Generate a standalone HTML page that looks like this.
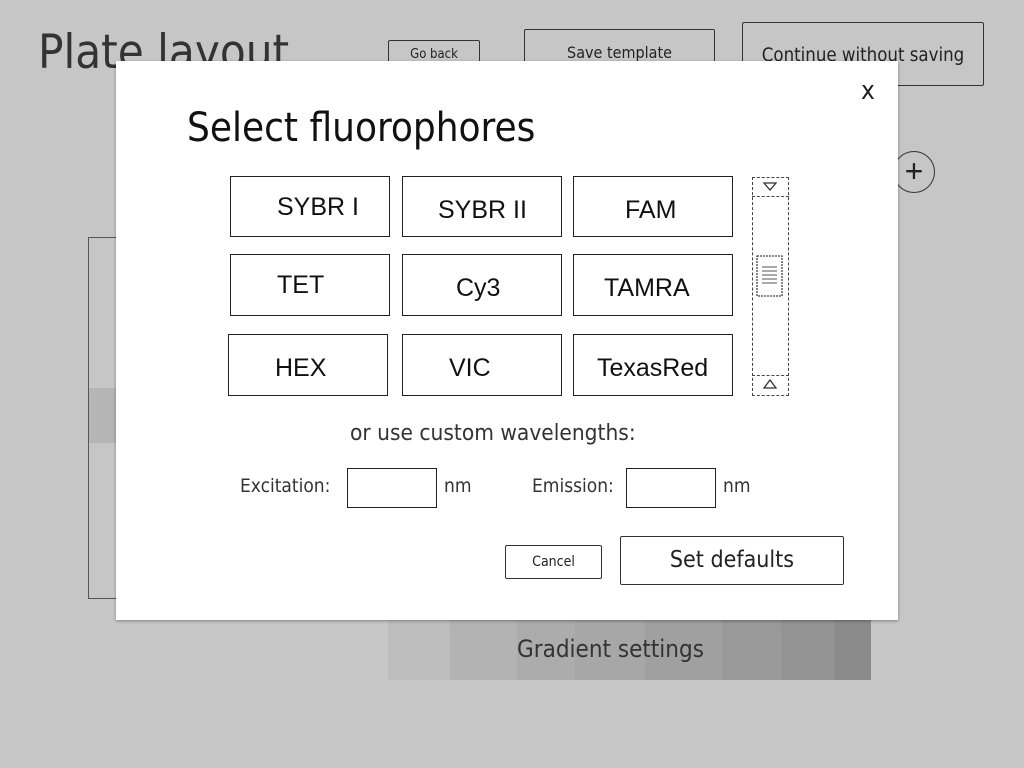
<!DOCTYPE html>
<html><head><meta charset="utf-8"><style>
*{margin:0;padding:0;box-sizing:border-box}
body{width:1024px;height:768px;background:#c6c6c6;position:relative;overflow:hidden;font-family:"Liberation Sans Narrow","DejaVu Sans Condensed","Liberation Sans",sans-serif;color:#222}
.a{position:absolute}
.bx{position:absolute;border:1.5px solid #333;border-radius:2px}
.fl{position:absolute;border:1px solid #222;background:#fff;font-family:"Liberation Sans",sans-serif;font-size:25px;line-height:66px;color:#111}
.fl span{position:absolute;top:0}
.seg{position:absolute;top:620px;height:60px}
</style></head><body>
<div class="a" style="left:38px;top:23px;font-size:47px;color:#333;line-height:60px">Plate layout</div>
<div class="bx" style="left:388px;top:40px;width:92px;height:28px;font-size:13px;text-align:center;line-height:28px">Go back</div>
<div class="bx" style="left:524px;top:29px;width:191px;height:40px;font-size:16px;text-align:center;line-height:46px">Save template</div>
<div class="bx" style="left:742px;top:22px;width:242px;height:64px;font-size:18.5px;text-align:center;line-height:66px">Continue without saving</div>
<div class="a" style="left:893px;top:151px;width:42px;height:42px;border:1.5px solid #333;border-radius:50%;text-align:center;line-height:38px;font-size:32px;font-family:'Liberation Sans',sans-serif">+</div>
<div class="a" style="left:88px;top:237px;width:40px;height:362px;border:1px solid #555;background:#c6c6c6"></div>
<div class="a" style="left:89px;top:388px;width:30px;height:55px;background:#b5b5b5"></div>
<div class="seg" style="left:388px;width:62px;background:#bdbdbd"></div>
<div class="seg" style="left:450px;width:67px;background:#b3b3b3"></div>
<div class="seg" style="left:517px;width:58px;background:#acacac"></div>
<div class="seg" style="left:575px;width:70px;background:#a7a7a7"></div>
<div class="seg" style="left:645px;width:77px;background:#a0a0a0"></div>
<div class="seg" style="left:722px;width:60px;background:#999"></div>
<div class="seg" style="left:782px;width:53px;background:#939393"></div>
<div class="seg" style="left:835px;width:36px;background:#8a8a8a"></div>
<div class="a" style="left:517px;top:631px;font-size:24px;color:#333;line-height:36px">Gradient settings</div>

<div class="a" style="left:116px;top:61px;width:782px;height:559px;background:#fff;box-shadow:0 1px 3px rgba(0,0,0,.35)"></div>
<div class="a" style="left:861px;top:76px;font-size:26px;color:#222">x</div>
<div class="a" style="left:187px;top:102px;font-size:40px;line-height:52px;color:#111">Select fluorophores</div>

<div class="fl" style="left:230px;top:176px;width:160px;height:61px"><span style="left:46px;top:-3px">SYBR I</span></div>
<div class="fl" style="left:402px;top:176px;width:160px;height:61px"><span style="left:35px">SYBR II</span></div>
<div class="fl" style="left:573px;top:176px;width:160px;height:61px"><span style="left:51px">FAM</span></div>
<div class="fl" style="left:230px;top:254px;width:160px;height:62px"><span style="left:46px;top:-3px">TET</span></div>
<div class="fl" style="left:402px;top:254px;width:160px;height:62px"><span style="left:53px">Cy3</span></div>
<div class="fl" style="left:573px;top:254px;width:160px;height:62px"><span style="left:30px">TAMRA</span></div>
<div class="fl" style="left:228px;top:334px;width:160px;height:62px"><span style="left:46px">HEX</span></div>
<div class="fl" style="left:402px;top:334px;width:160px;height:62px"><span style="left:46px">VIC</span></div>
<div class="fl" style="left:573px;top:334px;width:160px;height:62px"><span style="left:23px">TexasRed</span></div>

<div class="a" style="left:752px;top:177px;width:37px;height:219px;border:1.5px dashed #444"></div>
<div class="a" style="left:752px;top:196px;width:37px;height:0;border-top:1.5px dashed #444"></div>
<div class="a" style="left:752px;top:375px;width:37px;height:0;border-top:1.5px dashed #444"></div>
<svg class="a" style="left:752px;top:177px" width="37" height="219"><path d="M12 6 L24 6 L18 13 Z" fill="none" stroke="#333" stroke-width="1.3"/><path d="M12 211 L24 211 L18 203 Z" fill="none" stroke="#333" stroke-width="1.3"/><rect x="5" y="79" width="25" height="40" fill="none" stroke="#444" stroke-width="1.3" stroke-dasharray="2 1"/><g stroke="#555" stroke-width="1"><line x1="10" y1="90" x2="25" y2="90"/><line x1="10" y1="94" x2="25" y2="94"/><line x1="10" y1="98" x2="25" y2="98"/><line x1="10" y1="102" x2="25" y2="102"/><line x1="10" y1="106" x2="25" y2="106"/></g></svg>

<div class="a" style="left:350px;top:420px;font-size:22.5px;color:#333">or use custom wavelengths:</div>
<div class="a" style="left:240px;top:475px;font-size:19px;color:#333">Excitation:</div>
<div class="a" style="left:347px;top:468px;width:90px;height:40px;border:1px solid #222"></div>
<div class="a" style="left:444px;top:475px;font-size:19px;color:#333">nm</div>
<div class="a" style="left:532px;top:475px;font-size:19px;color:#333">Emission:</div>
<div class="a" style="left:626px;top:468px;width:90px;height:40px;border:1px solid #222"></div>
<div class="a" style="left:723px;top:475px;font-size:19px;color:#333">nm</div>

<div class="bx" style="left:505px;top:545px;width:97px;height:34px;font-size:14px;text-align:center;line-height:32px;border-width:1px">Cancel</div>
<div class="bx" style="left:620px;top:536px;width:224px;height:49px;font-size:23px;text-align:center;line-height:46px">Set defaults</div>
</body></html>
